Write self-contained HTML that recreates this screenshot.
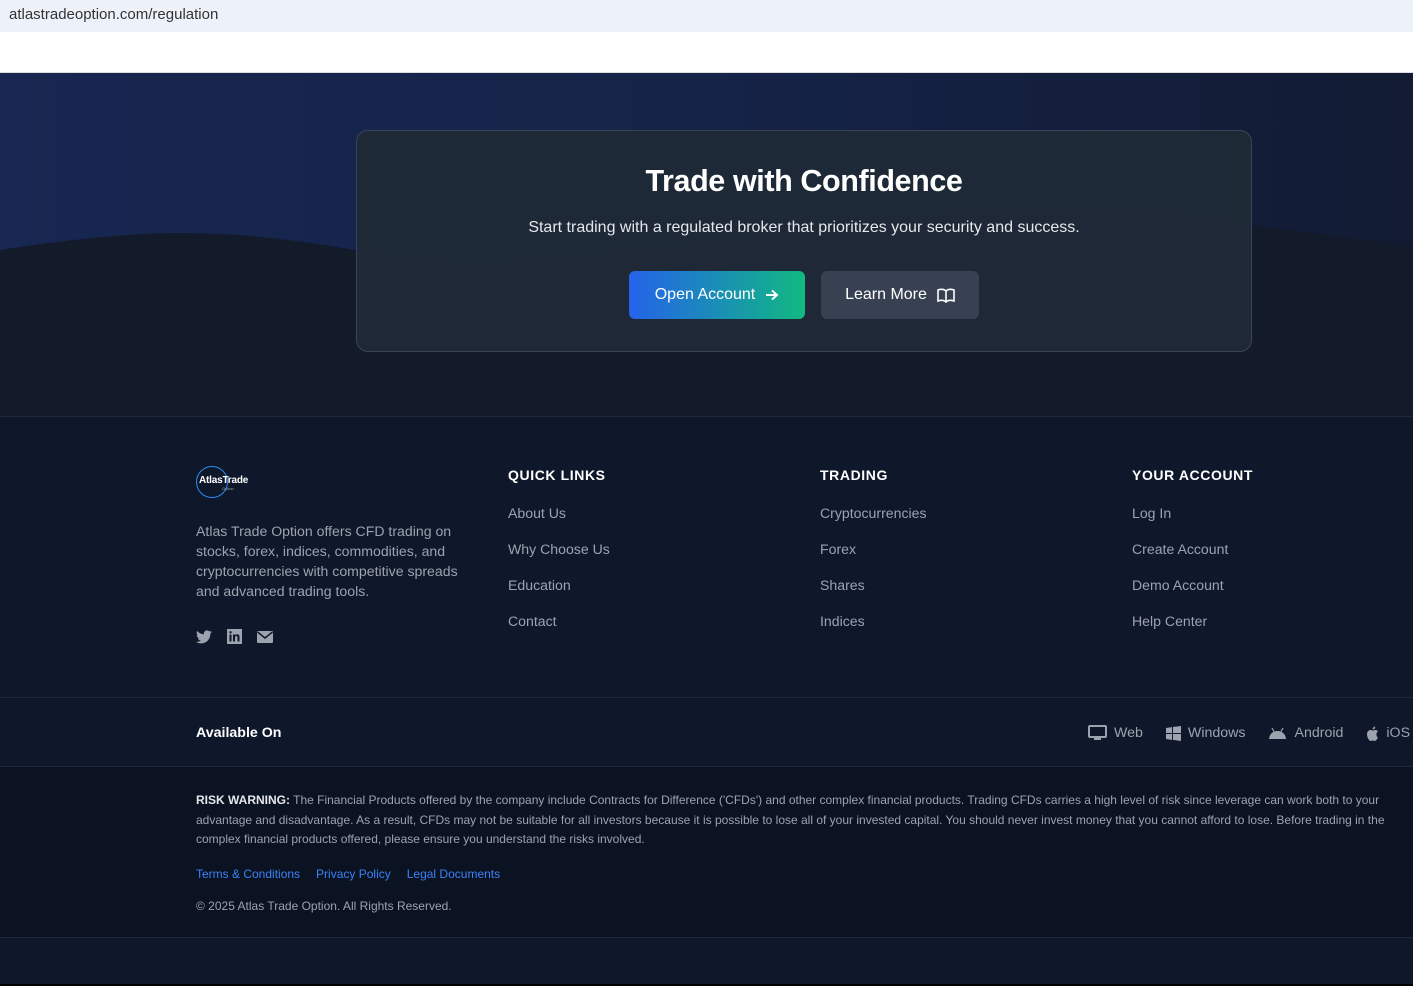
<!DOCTYPE html>
<html><head><meta charset="utf-8">
<style>
*{margin:0;padding:0;box-sizing:border-box}
body{width:1413px;height:986px;overflow:hidden;font-family:"Liberation Sans",Arial,sans-serif;background:#0f172a;position:relative}
.url{position:absolute;left:0;top:0;width:1413px;height:32px;background:#edf1f9;color:#333;font-size:15px;line-height:30px;padding-left:9px}
.white{position:absolute;top:32px;left:0;width:1413px;height:41px;background:#fff;border-bottom:1px solid #ddd}
.hero{position:absolute;top:73px;left:0;width:1413px;height:344px;background:linear-gradient(90deg,#172751 0%,#152348 50%,#121b33 100%);overflow:hidden}
.hero svg.wave{position:absolute;left:0;top:0}
.card{position:absolute;left:356px;top:57px;width:896px;height:222px;border:1px solid #3a4456;border-radius:12px;background:rgba(31,41,55,0.97);text-align:center}
.card h1{color:#fff;font-size:30.5px;font-weight:bold;margin-top:33px;letter-spacing:-0.4px}
.card p{color:#e5e7eb;font-size:16px;margin-top:20px}
.btns{position:absolute;top:140px;left:272px;display:flex;gap:16px}
.b1{width:176px;height:48px;border-radius:6px;background:linear-gradient(90deg,#2563eb,#10b981);color:#fff;font-size:16px;display:flex;align-items:center;justify-content:center;gap:10px}
.b2{width:158px;height:48px;border-radius:6px;background:#374151;color:#fff;font-size:16px;display:flex;align-items:center;justify-content:center;gap:10px}
.foot{position:absolute;top:416px;left:0;width:1413px;height:282px;background:#0f172a;border-top:1px solid #1e293b}
.logo{position:absolute;left:196px;top:49px;width:32px;height:32px;border:1.5px solid #2c8bf0;border-radius:50%}
.logo span{position:absolute;left:2px;top:8px;color:#fff;font-size:10px;font-weight:bold;white-space:nowrap;letter-spacing:-0.2px}
.logo i{position:absolute;left:25px;top:19px;color:#9aa;font-size:4px;font-style:normal}
.desc{position:absolute;left:196px;top:104px;width:270px;color:#9ca3af;font-size:14.1px;line-height:20px}
.soc{position:absolute;left:196px;top:212px;display:flex;gap:15px;align-items:center}
.col{position:absolute;top:50px}
.col h4{color:#fff;font-size:14px;font-weight:bold;letter-spacing:0.6px}
.col a{display:block;color:#9ca3af;font-size:14.1px;margin-top:19px;line-height:17px;text-decoration:none}
.col h4+a{margin-top:22px}
.avail{position:absolute;top:697px;left:0;width:1413px;height:70px;border-top:1px solid #1e293b;border-bottom:1px solid #1e293b;background:#0f172a}
.avail b{position:absolute;left:196px;top:27px;color:#fff;font-size:14.2px}
.plat{position:absolute;top:27px;left:1088px;display:flex;align-items:center;color:#9ca3af;font-size:14.2px;white-space:nowrap}
.plat span{display:flex;align-items:center;gap:7px;margin-right:23px}
.risk{position:absolute;top:767px;left:0;width:1413px;height:171px;background:#0b1222;border-bottom:1px solid #1e293b}
.risk p{position:absolute;left:196px;top:24px;width:1200px;color:#9ca3af;font-size:12px;line-height:19.5px}
.risk p b{color:#e5e7eb}
.links{position:absolute;left:196px;top:100px;font-size:12px;color:#3b82f6}
.links span{margin-right:16px}
.copy{position:absolute;left:196px;top:132px;font-size:12px;color:#9ca3af}
.bottom{position:absolute;top:938px;left:0;width:1413px;height:46px;background:#0f172a}
.black{position:absolute;top:984px;left:0;width:1413px;height:2px;background:#000}
</style></head><body>
<div class="url">atlastradeoption.com/regulation</div>
<div class="white"></div>
<div class="hero">
<svg class="wave" width="1413" height="344"><path d="M0 177 C60 168 120 160 180 160 C260 160 330 172 400 185 C600 210 900 120 1150 137 C1250 150 1330 165 1413 172 L1413 344 L0 344Z" fill="#131a2a"/></svg>
<div class="card">
<h1>Trade with Confidence</h1>
<p>Start trading with a regulated broker that prioritizes your security and success.</p>
<div class="btns">
<div class="b1">Open Account <svg width="14" height="12" viewBox="0 0 14 12"><path d="M1 6H12M7 1.5L12 6L7 10.5" stroke="#fff" stroke-width="2" fill="none"/></svg></div>
<div class="b2">Learn More <svg width="18" height="15" viewBox="0 0 18 15"><path d="M1 2C4 1 7 1 9 3C11 1 14 1 17 2V13C14 12 11 12 9 14C7 12 4 12 1 13Z M9 3V14" stroke="#fff" stroke-width="1.6" fill="none"/></svg></div>
</div>
</div>
</div>
<div class="foot">
<div class="logo"><span>AtlasTrade</span><i>Option</i></div>
<div class="desc">Atlas Trade Option offers CFD trading on stocks, forex, indices, commodities, and cryptocurrencies with competitive spreads and advanced trading tools.</div>
<div class="soc">
<svg width="16" height="14" viewBox="0 0 24 20"><path fill="#9ca3af" d="M24 2.4c-.9.4-1.8.7-2.8.8 1-.6 1.8-1.6 2.2-2.7-1 .6-2 1-3.1 1.2C19.3.7 18 0 16.6 0c-2.7 0-4.9 2.2-4.9 4.9 0 .4 0 .8.1 1.1C7.7 5.8 4.1 3.9 1.7.9c-.4.7-.7 1.6-.7 2.5 0 1.7.9 3.2 2.2 4.1-.8 0-1.6-.2-2.2-.6v.1c0 2.4 1.7 4.4 3.9 4.8-.4.1-.8.2-1.3.2-.3 0-.6 0-.9-.1.6 2 2.4 3.4 4.6 3.4-1.7 1.3-3.8 2.1-6.1 2.1H0c2.2 1.4 4.8 2.2 7.5 2.2 9.1 0 14-7.5 14-14v-.6c1-.7 1.8-1.6 2.5-2.6z"/></svg>
<svg width="15" height="15" viewBox="0 0 15 15"><rect x="0" y="0" width="15" height="15" fill="#9ca3af"/><rect x="2.5" y="5.5" width="2" height="7" fill="#0f172a"/><circle cx="3.5" cy="3.3" r="1.2" fill="#0f172a"/><path d="M6 5.5h2v1c.5-.8 1.3-1.2 2.2-1.2 1.6 0 2.3 1 2.3 2.7v4.5h-2V8.4c0-.9-.3-1.4-1-1.4s-1.5.5-1.5 1.4v4.1H6z" fill="#0f172a"/></svg>
<svg width="16" height="12" viewBox="0 0 16 12"><rect width="16" height="12" rx="1" fill="#9ca3af"/><path d="M0.5 1L8 7L15.5 1" stroke="#0f172a" stroke-width="1.5" fill="none"/></svg>
</div>
<div class="col" style="left:508px"><h4>QUICK LINKS</h4><a>About Us</a><a>Why Choose Us</a><a>Education</a><a>Contact</a></div>
<div class="col" style="left:820px"><h4>TRADING</h4><a>Cryptocurrencies</a><a>Forex</a><a>Shares</a><a>Indices</a></div>
<div class="col" style="left:1132px"><h4>YOUR ACCOUNT</h4><a>Log In</a><a>Create Account</a><a>Demo Account</a><a>Help Center</a></div>
</div>
<div class="avail"><b>Available On</b>
<div class="plat">
<span><svg width="19" height="16" viewBox="0 0 19 16"><rect x="1" y="1" width="17" height="11" rx="1" stroke="#9ca3af" stroke-width="2" fill="none"/><rect x="6" y="13" width="7" height="2" fill="#9ca3af"/></svg>Web</span>
<span><svg width="15" height="15" viewBox="0 0 15 15"><path fill="#9ca3af" d="M0 2l6-.9V7H0zM7 1l8-1v7H7zM0 8h6v5.9L0 13zM7 8h8v7l-8-1.1z"/></svg>Windows</span>
<span><svg width="19" height="12" viewBox="0 0 19 12"><path fill="#9ca3af" d="M1 12C1.5 7 5 4 9.5 4S17.5 7 18 12z"/><path d="M4 1l2 3.5M15 1l-2 3.5" stroke="#9ca3af" stroke-width="1.2"/></svg>Android</span>
<span><svg width="13" height="15" viewBox="0 0 13 15"><path fill="#9ca3af" d="M10.5 8c0-1.8 1.5-2.6 1.5-2.7-.8-1.2-2.1-1.3-2.5-1.3-1.1-.1-2 .6-2.6.6-.5 0-1.4-.6-2.3-.6C3.4 4 1 5 1 8.3c0 3.2 2.2 6.7 3.5 6.7.8 0 1.2-.5 2.2-.5s1.3.5 2.2.5c1.3 0 2.6-2.6 3-3.6-1.5-.6-1.4-2.2-1.4-3.4zM8.7 2.6C9.3 1.9 9.2 1 9.2.5c-.6 0-1.4.4-1.9 1-.5.5-.7 1.3-.6 2 .7 0 1.4-.4 2-.9z"/></svg>iOS</span>
</div></div>
<div class="risk">
<p><b>RISK WARNING:</b> The Financial Products offered by the company include Contracts for Difference ('CFDs') and other complex financial products. Trading CFDs carries a high level of risk since leverage can work both to your advantage and disadvantage. As a result, CFDs may not be suitable for all investors because it is possible to lose all of your invested capital. You should never invest money that you cannot afford to lose. Before trading in the complex financial products offered, please ensure you understand the risks involved.</p>
<div class="links"><span>Terms &amp; Conditions</span><span>Privacy Policy</span><span>Legal Documents</span></div>
<div class="copy">© 2025 Atlas Trade Option. All Rights Reserved.</div>
</div>
<div class="bottom"></div>
<div class="black"></div>
</body></html>
